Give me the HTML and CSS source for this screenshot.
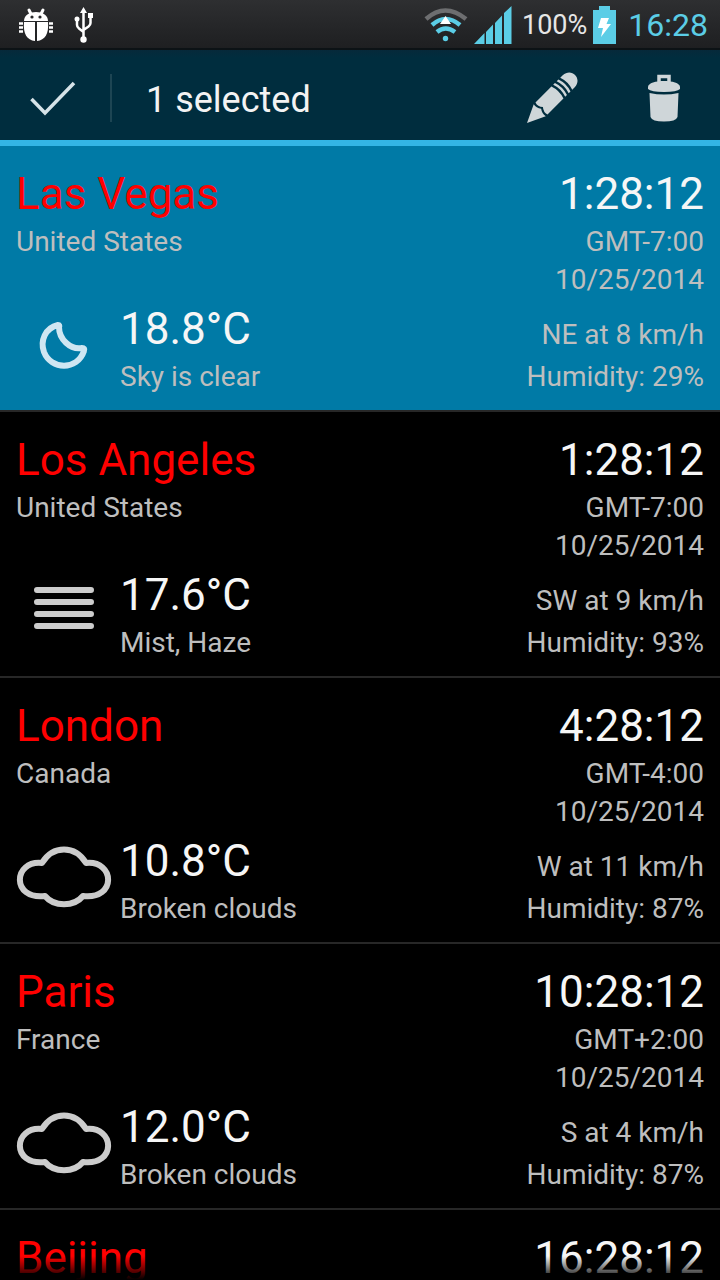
FILE: index.html
```html
<!DOCTYPE html>
<html lang="en">

<head>
  <meta charset="UTF-8">
  <meta name="viewport" content="width=device-width, initial-scale=1.0">
  <title>World Clock &amp; Weather</title>
  <link rel="stylesheet" href="styles.css">
</head>

<body>
  <!-- Shared weather icons -->
  <svg class="sprite" aria-hidden="true">
    <symbol id="icon-moon" viewBox="0 0 96 96">
      <path d="M42 24 C29 27 24 40 28 51 C35 69 61 70 68 50 C69 48 68 47 66 47 C54 49 43 38 43 26 Q44 24 42 24 Z" />
    </symbol>
    <symbol id="icon-mist" viewBox="0 0 96 96">
      <path d="M21 23 H75 M21 35 H75 M21 47 H75 M21 59 H75" />
    </symbol>
    <symbol id="icon-cloud" viewBox="0 0 96 96">
      <path d="M26 30 C37 12 59 12 70 30 C99 27 101 67 67 63 C58 74 38 74 29 63 C-5 67 -3 27 26 30 Z" />
    </symbol>
  </svg>

  <div class="status-bar">
    <div class="notifications">
      <svg width="36" height="36" viewBox="0 0 36 36" fill="#fff" aria-hidden="true">
        <path d="M11 3 L13 7 M25 3 L23 7" stroke="#fff" stroke-width="3" stroke-linecap="round" />
        <path d="M6 14 C6 2 30 2 30 14 Z" />
        <circle cx="14" cy="10" r="1.6" fill="#28292b" />
        <circle cx="22" cy="10" r="1.6" fill="#28292b" />
        <path d="M6 15 H17 V34 C9 33 5 27 6 15 Z M19 15 H30 C31 27 27 33 19 34 Z" />
        <path d="M1 16.500 H5 M1 20.500 H5 M1 24.500 H5 M31 16.500 H35 M31 20.500 H35 M31 24.500 H35" stroke="#fff" stroke-width="2.500" />
      </svg>
      <svg width="20" height="36" viewBox="0 0 20 36" fill="#fff" aria-hidden="true">
        <path d="M9.500 4 V32 M3 13 V18 Q3 20 5 21.500 L9.500 25 M16.500 8 V16 Q16.500 18 14.500 19.500 L9.500 23" fill="none" stroke="#fff" stroke-width="2.500" />
        <path d="M9.500 0 L13 6 H6 Z M14 6 H19 V11 H14 Z" />
        <circle cx="3" cy="12" r="2.500" />
        <circle cx="9.500" cy="32.500" r="3.200" />
      </svg>
    </div>
    <div class="indicators">
      <svg width="44" height="36" viewBox="0 0 44 36" fill="none" stroke="#5bcde6" stroke-width="4.500" aria-hidden="true">
        <path d="M2 12 Q21 -5 42 12" stroke="#6d6e70" />
        <path d="M8 18 Q21.500 6 36 18" />
        <path d="M13 25 Q21.500 18 31 25" />
        <circle cx="21.500" cy="31.500" r="2.700" fill="#5bcde6" stroke="none" />
        <path d="M21.500 9 L27 17 H16 Z" fill="#fff" stroke="none" />
      </svg>
      <svg width="38" height="38" viewBox="0 0 38 38" fill="#5bcde6" aria-hidden="true">
        <path d="M0 38 L10.500 27 V38 Z M12 26 L19 18.500 V38 H12 Z M21 17 L28 9.500 V38 H21 Z M30 7 L37.500 0 V38 H30 Z" />
      </svg>
      <span class="battery-level">100%</span>
      <svg width="23" height="38" viewBox="0 0 23 38" aria-hidden="true">
        <path d="M0 4 H6 V0 H17 V4 H23 V38 H0 Z" fill="#5bcde6" />
        <path d="M8 12 H16 L13.500 18 H18 L8 31 L10 22 H5 Z" fill="#fff" />
      </svg>
      <span class="clock">16:28</span>
    </div>
  </div>

  <header class="action-bar">
    <button type="button" class="done" aria-label="Done">
      <svg width="48" height="48" viewBox="0 0 48 48" aria-hidden="true">
        <path d="M3.500 25 L17 39 L46 9" fill="none" stroke="#d6e3e8" stroke-width="3.500" />
      </svg>
    </button>
    <h1>1 selected</h1>
    <button type="button" class="action" aria-label="Edit">
      <svg width="52" height="52" viewBox="0 0 52 52" aria-hidden="true">
        <g transform="translate(1 51) rotate(-45)" fill="#cfd6d9">
          <path d="M0 0 L18 -8.500 Q17 -4 20 0 Q17 4 18 8.500 Z" />
          <path d="M20.500 -8.500 H43 Q46 0 43 8.500 H20.500 Q19 4 22.500 0 Q19 -4 20.500 -8.500 Z" />
          <path d="M45.500 -8.500 H48 Q51 0 48 8.500 H45.500 Q48.500 0 45.500 -8.500 Z" />
          <path d="M50.500 -8.500 H53 Q56 0 53 8.500 H50.500 Q53.500 0 50.500 -8.500 Z" />
          <path d="M55.500 -8.500 H59 C71 -8 71 8 59 8.500 H55.500 Q58.500 0 55.500 -8.500 Z" />
        </g>
      </svg>
    </button>
    <button type="button" class="action" aria-label="Delete">
      <svg width="32" height="48" viewBox="0 0 32 48" fill="#cfd6d9" aria-hidden="true">
        <path d="M11 9 V2.500 H21 V9" fill="none" stroke="#cfd6d9" stroke-width="3.500" />
        <path d="M0 13 C0 5 32 5 32 13 V15 Q29 18 16 18 Q3 18 0 15 Z" />
        <path d="M1.500 19 Q16 22 30.500 19 L29.500 43 Q28 47.500 16 47.500 Q4 47.500 2.500 43 Z" />
      </svg>
    </button>
  </header>

  <main class="list-wrap">
    <ul class="city-list">
      <li class="city selected">
        <h2 class="name">Las Vegas</h2>
        <time class="time">1:28:12</time>
        <span class="country">United States</span>
        <span class="zone">GMT-7:00</span>
        <span class="date">10/25/2014</span>
        <svg class="icon" aria-hidden="true"><use href="#icon-moon" /></svg>
        <span class="temp">18.8°C</span>
        <span class="wind">NE at 8 km/h</span>
        <span class="sky">Sky is clear</span>
        <span class="humidity">Humidity: 29%</span>
      </li>
      <li class="city">
        <h2 class="name">Los Angeles</h2>
        <time class="time">1:28:12</time>
        <span class="country">United States</span>
        <span class="zone">GMT-7:00</span>
        <span class="date">10/25/2014</span>
        <svg class="icon" aria-hidden="true"><use href="#icon-mist" /></svg>
        <span class="temp">17.6°C</span>
        <span class="wind">SW at 9 km/h</span>
        <span class="sky">Mist, Haze</span>
        <span class="humidity">Humidity: 93%</span>
      </li>
      <li class="city">
        <h2 class="name">London</h2>
        <time class="time">4:28:12</time>
        <span class="country">Canada</span>
        <span class="zone">GMT-4:00</span>
        <span class="date">10/25/2014</span>
        <svg class="icon" aria-hidden="true"><use href="#icon-cloud" /></svg>
        <span class="temp">10.8°C</span>
        <span class="wind">W at 11 km/h</span>
        <span class="sky">Broken clouds</span>
        <span class="humidity">Humidity: 87%</span>
      </li>
      <li class="city">
        <h2 class="name">Paris</h2>
        <time class="time">10:28:12</time>
        <span class="country">France</span>
        <span class="zone">GMT+2:00</span>
        <span class="date">10/25/2014</span>
        <svg class="icon" aria-hidden="true"><use href="#icon-cloud" /></svg>
        <span class="temp">12.0°C</span>
        <span class="wind">S at 4 km/h</span>
        <span class="sky">Broken clouds</span>
        <span class="humidity">Humidity: 87%</span>
      </li>
      <li class="city">
        <h2 class="name">Beijing</h2>
        <time class="time">16:28:12</time>
      </li>
    </ul>
  </main>
</body>

</html>
```
FILE: styles.css
```css
* {
  box-sizing: border-box;
}

body {
  display: flex;
  flex-direction: column;
  height: 100vh;
  margin: 0;
  overflow: hidden;
  font-family: Roboto, "Noto Sans", sans-serif;
  font-size: 28px;
  background: #000;
  color: #bebebe;
}

svg {
  display: block;
  flex: none;
}

.sprite {
  position: absolute;
  width: 0;
  height: 0;
}

/* System status bar */
.status-bar {
  display: flex;
  flex: none;
  align-items: center;
  justify-content: space-between;
  height: 50px;
  padding: 2px 12px 0 18px;
  background: linear-gradient(#2e2f31, #1e1f21);
  border-bottom: 2px solid #0c1215;
}

.notifications {
  display: flex;
  gap: 20px;
}

.indicators {
  display: flex;
  align-items: center;
  gap: 6px;
}

.battery-level {
  margin-left: 4px;
  font-size: 27px;
  color: #e6e6e6;
}

.clock {
  margin-left: 6px;
  font-size: 32px;
  color: #5bcde6;
}

/* Selection mode bar */
.action-bar {
  display: flex;
  flex: none;
  align-items: center;
  height: 96px;
  padding-top: 6px;
  background: linear-gradient(#06293a, #002d3e 8px);
  border-bottom: 6px solid #33b5e5;
}

.action-bar h1 {
  flex: 1;
  margin: 0;
  padding: 4px 0 0 34px;
  border-left: 2px solid #1d4553;
  font-size: 36px;
  font-weight: 400;
  line-height: 44px;
  color: #f3f3f3;
}

button {
  display: flex;
  align-items: center;
  justify-content: center;
  height: 84px;
  padding: 0;
  border: none;
  background: none;
  cursor: pointer;
}

.done {
  width: 110px;
  padding-right: 6px;
}

.action {
  width: 112px;
}

/* City list */
.list-wrap {
  position: relative;
  flex: 1;
  min-height: 0;
}

.list-wrap::after {
  content: "";
  position: absolute;
  right: 0;
  bottom: 0;
  left: 0;
  height: 24px;
  background: linear-gradient(transparent, #000);
  pointer-events: none;
}

.city-list {
  height: 100%;
  margin: 0;
  padding: 0;
  overflow-y: auto;
  scrollbar-width: none;
  list-style: none;
}

.city {
  display: grid;
  grid-template-columns: 96px 1fr auto;
  grid-template-rows: 57px 38px 40px 57px 38px;
  grid-template-areas:
    "name name time"
    "country country zone"
    ". . date"
    "icon temp wind"
    "icon sky humidity";
  column-gap: 8px;
  align-items: baseline;
  padding: 20px 16px 14px;
  border-bottom: 2px solid #272727;
  line-height: 38px;
}

.selected {
  background: #007aa6;
}

.name,
.time,
.temp {
  font-size: 44px;
  font-weight: 400;
  line-height: 56px;
  color: #f6f6f6;
}

.name {
  grid-area: name;
  margin: 0;
  color: #f00;
}

.time,
.zone,
.date,
.wind,
.humidity {
  text-align: right;
}

.time {
  grid-area: time;
}

.country {
  grid-area: country;
}

.zone {
  grid-area: zone;
}

.date {
  grid-area: date;
}

.temp {
  grid-area: temp;
}

.wind {
  grid-area: wind;
}

.sky {
  grid-area: sky;
}

.humidity {
  grid-area: humidity;
}

.icon {
  grid-area: icon;
  align-self: center;
  width: 96px;
  height: 96px;
  fill: none;
  stroke: #ccc;
  stroke-width: 6px;
  stroke-linecap: round;
  stroke-linejoin: round;
}

.selected .icon {
  stroke: #cfe6f2;
}
```
